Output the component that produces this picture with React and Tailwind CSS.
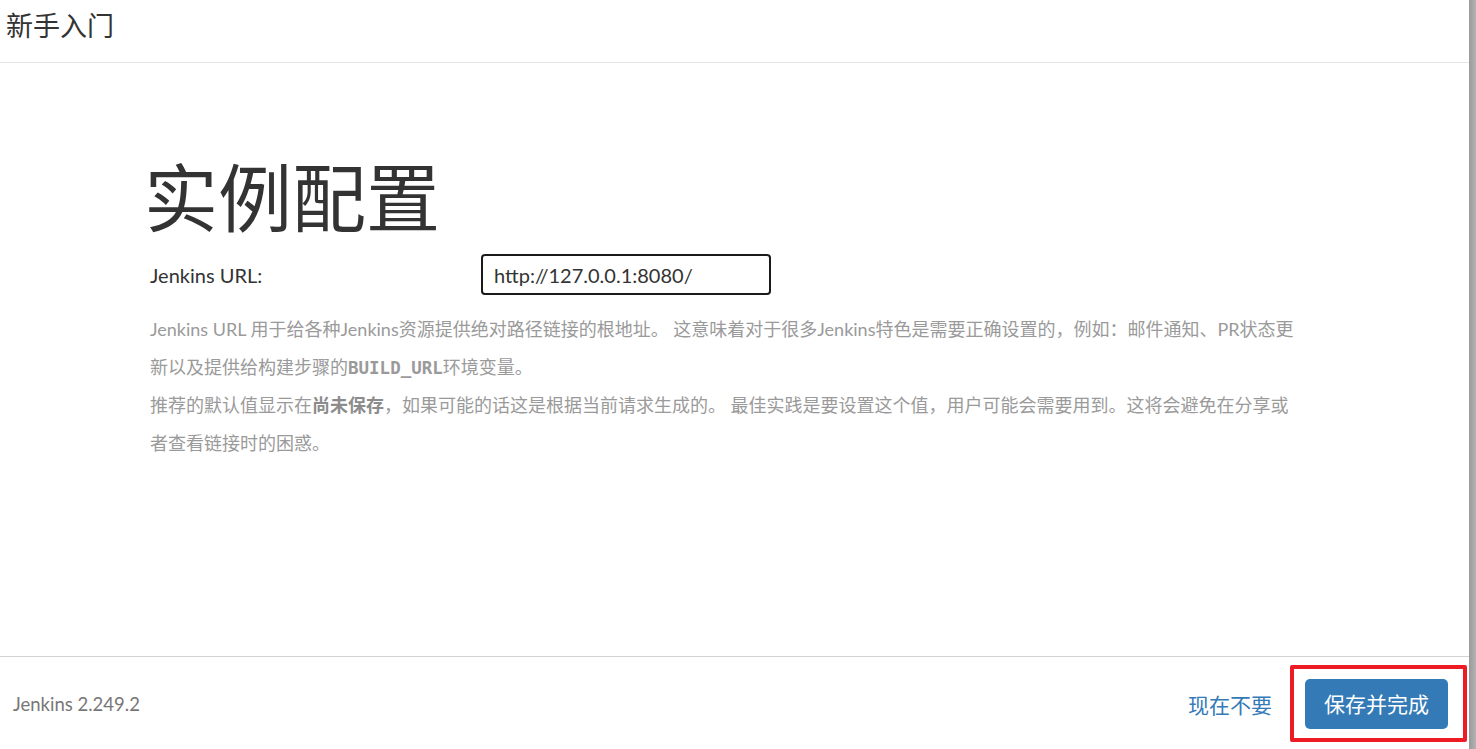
import React from 'react'

const FONT = "font-['Lato','Noto_Sans_CJK_SC',sans-serif]"

export default function App() {
  return (
    <div className={`flex h-[749px] w-[1476px] bg-white ${FONT}`}>
      <div className="flex flex-1 flex-col">
        {/* header */}
        <div className="flex h-[63px] items-center border-b border-[#e5e5e5] pl-[6px]">
          <h1 className="-mt-[12px] text-[27px] leading-none text-[#333]">新手入门</h1>
        </div>

        {/* body */}
        <div className="flex-1 pl-[147px] pt-[93px]">
          <h2 className="-ml-[3px] pt-[3px] text-[74px] leading-[77px] text-[#333]">实例配置</h2>

          <div className="mt-[18px] flex h-[41px] items-center">
            <label className="w-[334px] pl-[3px] text-[20px] text-[#333]">Jenkins URL:</label>
            <input
              type="text"
              defaultValue="http://127.0.0.1:8080/"
              className={`h-[41px] w-[290px] rounded-[4px] border-2 border-[#1a1a1a] px-[11px] text-[20px] text-[#333] outline-none ${FONT}`}
            />
          </div>

          <div className="mt-[16px] w-[1152px] pl-[3px] text-[18px] leading-[37.5px] text-[#9a9a9a]">
            <p>
              Jenkins URL 用于给各种Jenkins资源提供绝对路径链接的根地址。 这意味着对于很多Jenkins特色是需要正确设置的，例如：邮件通知、PR状态更新以及提供给构建步骤的
              <code className="font-['DejaVu_Sans_Mono',monospace] text-[17.5px] font-bold">BUILD_URL</code>
              环境变量。
            </p>
            <p>
              推荐的默认值显示在<strong className="font-bold text-[#8c8c8c]">尚未保存</strong>，如果可能的话这是根据当前请求生成的。 最佳实践是要设置这个值，用户可能会需要用到。这将会避免在分享或者查看链接时的困惑。
            </p>
          </div>
        </div>

        {/* footer */}
        <div className="flex h-[93px] items-center justify-between border-t border-[#d2d2d2] pl-[13px] pr-[2px]">
          <span className="mt-[4px] text-[18.5px] text-[#777]">Jenkins 2.249.2</span>
          <div className="flex items-center gap-[18px]">
            <a className="mt-[4px] cursor-pointer text-[21px] text-[#337ab7]">现在不要</a>
            <div className="rounded-[2px] border-4 border-[#ed1c24] pb-[9px] pl-[11px] pr-[15px] pt-[10px]">
              <button className="flex h-[50px] w-[143px] items-center justify-center rounded-[5px] bg-[#337ab7] text-[21px] text-white">
                保存并完成
              </button>
            </div>
          </div>
        </div>
      </div>
      <div className="w-[7px] bg-gradient-to-r from-[#9a9a9a] to-[#b3b3b3]" />
    </div>
  )
}
